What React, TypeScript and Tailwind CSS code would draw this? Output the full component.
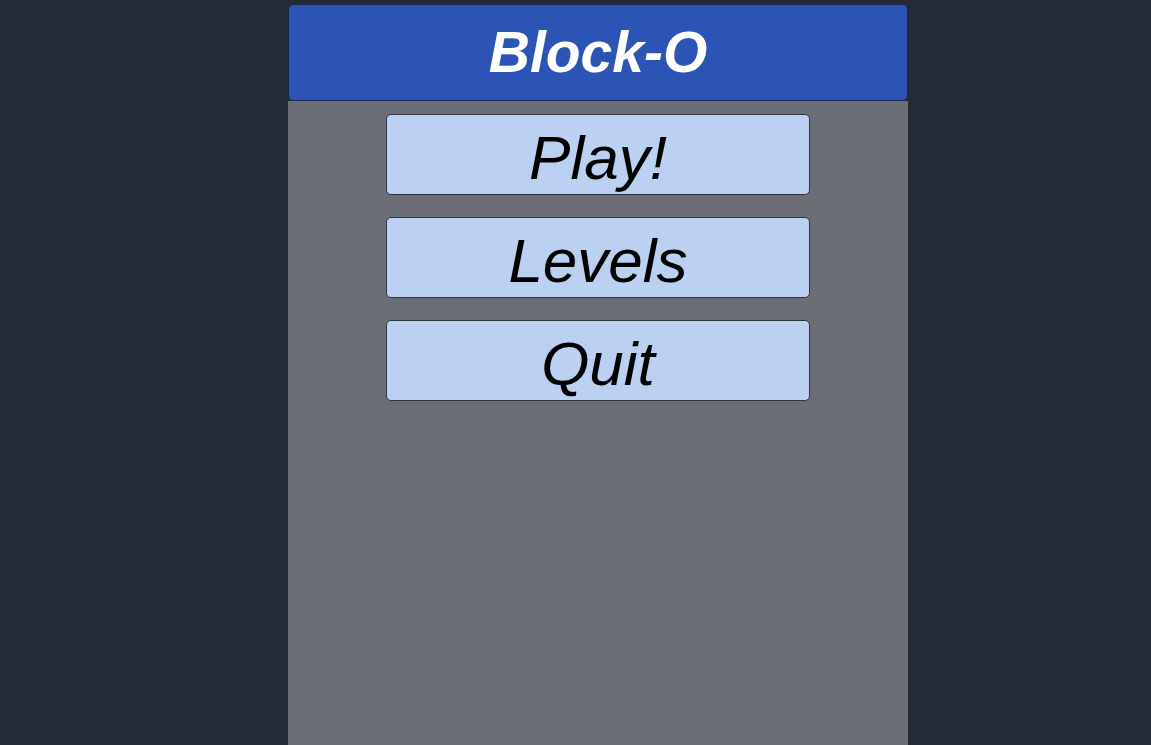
import React from "react";

export default function App() {
  const items = ["Play!", "Levels", "Quit"];
  return (
    <div className="min-h-[745px] h-screen w-full bg-[#222b36] overflow-hidden" style={{ fontFamily: '"Liberation Sans", Arial, sans-serif' }}>
      <div className="ml-[288px] w-[620px] h-full pt-1 flex flex-col">
        <div className="h-[97px] shrink-0 bg-[#2c54b4] border border-[#1b2547] rounded-[5px] flex items-center justify-center">
          <span className="text-white font-bold italic text-[57px] leading-none">Block-O</span>
        </div>
        <div className="flex-1 bg-[#6b6e76] flex flex-col items-center pt-[13px] gap-[22px]">
          {items.map((t) => (
            <button
              key={t}
              className="w-[424px] h-[81px] bg-[#bcd1f1] border border-[#2e3440] rounded-[5px] flex items-center justify-center pt-[6px] text-black italic text-[62px] leading-none"
            >
              {t}
            </button>
          ))}
        </div>
      </div>
    </div>
  );
}
